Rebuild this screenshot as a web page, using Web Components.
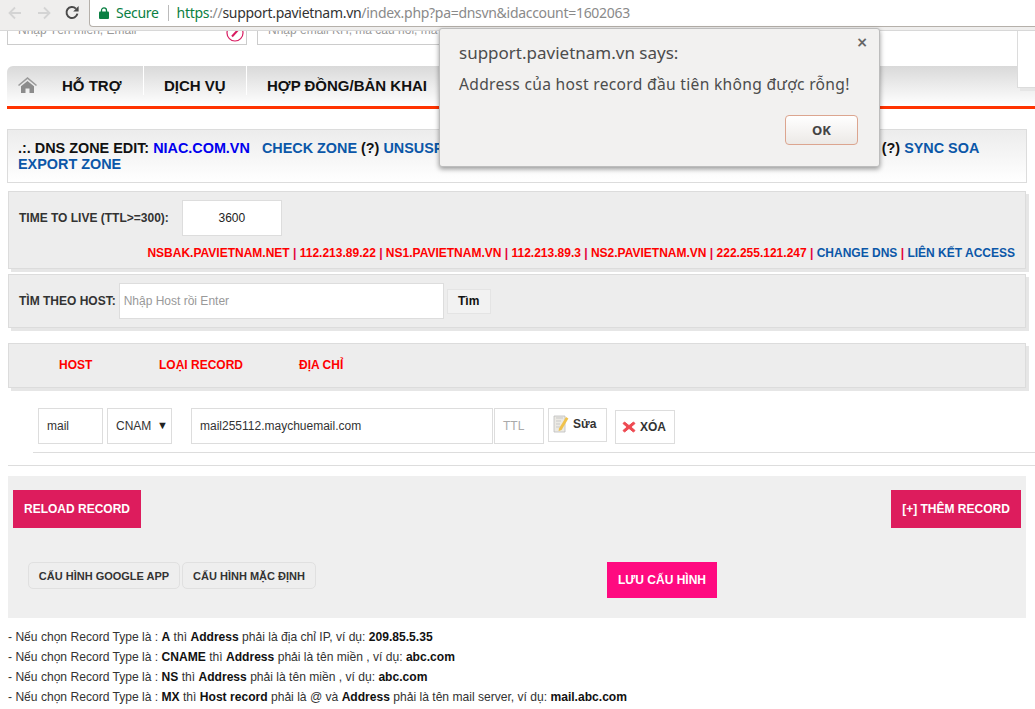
<!DOCTYPE html>
<html lang="vi">
<head>
<meta charset="utf-8">
<title>DNS Zone Edit</title>
<style>
    html, body { margin: 0; height: 709px; overflow: hidden; background: #fff; }
    body { font: 12px/1.2 "Liberation Sans", Arial, sans-serif; color: #222; position: relative; }
    b { font-weight: bold; }
    .blue { color: #0b57a8; }
    .navy { color: #0000ee; }
    .red { color: #ff0000; }
    .sep { color: #e4003a; }
</style>
</head>
<body>
<browser-bar></browser-bar>
<site-search></site-search>
<main-nav></main-nav>

<pa-panel variant="zone"><b>.:. DNS ZONE EDIT: <span class="navy">NIAC.COM.VN</span> &nbsp; <span class="blue">CHECK ZONE</span> (?) <span class="blue">UNSUSPEND</span><span style="display:inline-block;width:408px"></span>(?) <span class="blue">SYNC SOA</span><br><span class="blue">EXPORT ZONE</span></b></pa-panel>

<pa-panel variant="ttl">
    <ttl-row>
        <span slot="label">TIME TO LIVE (TTL&gt;=300):</span>
        <span slot="value">3600</span>
        <b slot="dns"><span class="red">NSBAK.PAVIETNAM.NET</span> <span class="sep">|</span> <span class="red">112.213.89.22</span> <span class="sep">|</span> <span class="red">NS1.PAVIETNAM.VN</span> <span class="sep">|</span> <span class="red">112.213.89.3</span> <span class="sep">|</span> <span class="red">NS2.PAVIETNAM.VN</span> <span class="sep">|</span> <span class="red">222.255.121.247</span> <span class="sep">|</span> <span class="blue">CHANGE DNS</span> <span class="sep">|</span> <span class="blue">LIÊN KẾT ACCESS</span></b>
    </ttl-row>
</pa-panel>

<pa-panel variant="find"><find-host></find-host></pa-panel>
<pa-panel variant="head"><record-head></record-head></pa-panel>
<record-row></record-row>
<record-actions></record-actions>
<help-notes></help-notes>
<side-box></side-box>
<alert-dialog></alert-dialog>

<script>
class BrowserBar extends HTMLElement {
    connectedCallback() {
        this.attachShadow({ mode: 'open' });
        this.shadowRoot.innerHTML = `
            <style>
                :host { display: flex; height: 31px; background: #efeeed; box-sizing: border-box; border-bottom: 1px solid #d8d8d8; position: relative; z-index: 2; }
                .nav { width: 89px; flex: none; display: flex; align-items: center; height: 26px; padding-left: 7px; box-sizing: border-box; gap: 13px; }
                svg { display: block; flex: none; }
                .url { flex: 1; height: 27px; box-sizing: border-box; background: #fff; border: 1px solid #b5b0aa; border-width: 0 0 1px 1px; border-radius: 0 0 0 4px; display: flex; align-items: center; padding: 0 0 1px 9px; font: 14px "Noto Sans", sans-serif; letter-spacing: -.3px; white-space: nowrap; overflow: hidden; }
                .secure { color: #0b8043; margin-left: 7px; }
                .div { width: 1px; height: 16px; background: #bbb; margin: 0 8px 0 9px; }
                .https { color: #0b8043; }
                .host { color: #333; }
                .rest { color: #8a8a8a; }
            </style>
            <div class="nav">
                <svg width="16" height="16" viewBox="0 0 16 16" fill="none" stroke="#d4d4d4" stroke-width="1.8"><path d="M14 8H2.500M8 2.500 2.500 8 8 13.500"/></svg>
                <svg width="16" height="16" viewBox="0 0 16 16" fill="none" stroke="#d4d4d4" stroke-width="1.8"><path d="M2 8h11.500M8 2.500 13.500 8 8 13.500"/></svg>
                <svg width="16" height="16" viewBox="0 0 16 16" fill="none" stroke="#4a4a4a" stroke-width="2" style="margin-left:-1px"><path d="M13.400 8.600A5.500 5.500 0 1 1 11.900 3.600"/><path d="M14.600 1v5.400H9.200z" fill="#4a4a4a" stroke="none"/></svg>
            </div>
            <div class="url">
                <svg width="10" height="12" viewBox="0 0 10 12"><path d="M2.500 5V3.400a2.500 2.500 0 0 1 5 0V5" fill="none" stroke="#0b8043" stroke-width="1.3"/><rect y="4.600" width="10" height="7.400" rx="1" fill="#0b8043"/></svg>
                <span class="secure">Secure</span><span class="div"></span><span class="https">https</span><span class="rest">://</span><span class="host">support.pavietnam.vn</span><span class="rest">/index.php?pa=dnsvn&amp;idaccount=1602063</span>
            </div>`;
    }
}
customElements.define('browser-bar', BrowserBar);

class SiteSearch extends HTMLElement {
    connectedCallback() {
        this.attachShadow({ mode: 'open' });
        this.shadowRoot.innerHTML = `
            <style>
                :host { display: flex; height: 14px; overflow: hidden; align-items: flex-end; padding-left: 7px; font: 12px/16px "Liberation Sans", sans-serif; color: #999; }
                .box { flex: none; height: 36px; box-sizing: border-box; border: 1px solid #ccc; background: #fff; padding: 12px 10px 0; position: relative; white-space: nowrap; }
                .one { width: 240px; }
                .two { width: 580px; margin-left: 10px; }
                svg { position: absolute; right: 2px; top: 14px; }
            </style>
            <div class="box one">Nhập Tên miền, Email
                <svg width="18" height="18" viewBox="0 0 18 18" fill="none"><circle cx="9" cy="9" r="8" stroke="#d81b60" stroke-width="1.2"/><path d="M6 12.500 12 6" stroke="#d81b60" stroke-width="2"/></svg>
            </div>
            <div class="box two">Nhập email KH, mã câu hỏi, mã</div>`;
    }
}
customElements.define('site-search', SiteSearch);

class MainNav extends HTMLElement {
    connectedCallback() {
        this.attachShadow({ mode: 'open' });
        this.shadowRoot.innerHTML = `
            <style>
                :host { display: flex; margin: 21px 0 0 7px; height: 43px; box-sizing: border-box; border-bottom: 3px solid #ff3300; border-top-left-radius: 6px; background: linear-gradient(#d9d9d9, #fff); font: bold 15px "Liberation Sans", sans-serif; color: #111; }
                .home { width: 54px; flex: none; display: flex; align-items: center; padding: 0 0 2px 11px; box-sizing: border-box; }
                a { display: flex; align-items: center; height: 29px; padding-top: 10px; box-sizing: border-box; border-right: 1px solid #fff; white-space: nowrap; }
                .a { width: 83px; padding-left: 1px; }
                .b { width: 103px; padding-left: 20px; }
                .c { padding-left: 20px; border-right: 0; }
            </style>
            <div class="home">
                <svg width="19" height="16" viewBox="0 0 19 16"><path d="M9.500 0 0 8l1 1 8.500-7 8.500 7 1-1z" fill="#9a9a9a"/><path d="M3 9.200 9.500 4 16 9.200V16h-4.500v-4.500h-4V16H3z" fill="#8c8c8c"/></svg>
            </div>
            <a class="a">HỖ TRỢ</a>
            <a class="b">DỊCH VỤ</a>
            <a class="c">HỢP ĐỒNG/BẢN KHAI</a>`;
    }
}
customElements.define('main-nav', MainNav);

class PaPanel extends HTMLElement {
    connectedCallback() {
        this.attachShadow({ mode: 'open' });
        this.shadowRoot.innerHTML = `
            <style>
                :host { display: block; box-sizing: border-box; margin-left: 8px; width: 1018px; border: 1px solid #dcdcdc; background: #ededed; box-shadow: 3px 3px 0 #e6e6e6; }
                :host([variant="zone"]) { margin: 20px 0 0 7px; width: 1020px; height: 54px; background: linear-gradient(#ececec, #fff); box-shadow: none; padding: 10px 10px 0; font: bold 14.4px/16px "Liberation Sans", sans-serif; color: #111; white-space: nowrap; }
                :host([variant="ttl"]) { margin-top: 8px; height: 78px; }
                :host([variant="find"]) { margin-top: 5px; height: 54px; }
                :host([variant="head"]) { margin-top: 15px; height: 45px; }
            </style>
            <slot></slot>`;
    }
}
customElements.define('pa-panel', PaPanel);

class TtlRow extends HTMLElement {
    connectedCallback() {
        this.attachShadow({ mode: 'open' });
        this.shadowRoot.innerHTML = `
            <style>
                :host { display: block; padding: 8px 10px 0; font: 12px "Liberation Sans", sans-serif; color: #333; }
                .top { display: flex; align-items: center; gap: 13px; }
                .label { font-weight: bold; }
                .value { width: 100px; height: 36px; box-sizing: border-box; background: #fff; border: 1px solid #ddd; display: flex; align-items: center; justify-content: center; color: #222; }
                .dns { text-align: right; margin-top: 10px; line-height: 15px; white-space: nowrap; }
            </style>
            <div class="top"><span class="label"><slot name="label"></slot></span><span class="value"><slot name="value"></slot></span></div>
            <div class="dns"><slot name="dns"></slot></div>`;
    }
}
customElements.define('ttl-row', TtlRow);

class FindHost extends HTMLElement {
    connectedCallback() {
        this.attachShadow({ mode: 'open' });
        this.shadowRoot.innerHTML = `
            <style>
                :host { display: flex; align-items: center; height: 52px; padding: 0 0 0 10px; font: 12px "Liberation Sans", sans-serif; color: #333; }
                b { margin-right: 3px; }
                .input { width: 325px; height: 36px; box-sizing: border-box; background: #fff; border: 1px solid #ddd; padding: 0 4px; display: flex; align-items: center; color: #999; }
                .btn { margin-left: 3px; width: 44px; height: 25px; box-sizing: border-box; background: #f2f2f2; border: 1px solid #e4e4e4; display: flex; align-items: center; justify-content: center; font-weight: bold; color: #111; }
            </style>
            <b>TÌM THEO HOST:</b><div class="input">Nhập Host rồi Enter</div><div class="btn">Tìm</div>`;
    }
}
customElements.define('find-host', FindHost);

class RecordHead extends HTMLElement {
    connectedCallback() {
        this.attachShadow({ mode: 'open' });
        this.shadowRoot.innerHTML = `
            <style>
                :host { display: flex; align-items: center; height: 42px; font: bold 12px "Liberation Sans", sans-serif; color: #ff0000; padding-left: 50px; }
                .host { width: 100px; }
                .type { width: 140px; }
            </style>
            <span class="host">HOST</span><span class="type">LOẠI RECORD</span><span>ĐỊA CHỈ</span>`;
    }
}
customElements.define('record-head', RecordHead);

class RecordRow extends HTMLElement {
    connectedCallback() {
        this.attachShadow({ mode: 'open' });
        this.shadowRoot.innerHTML = `
            <style>
                :host { display: block; margin: 20px 0 0; font: 12px "Liberation Sans", sans-serif; color: #333; }
                .row { display: flex; align-items: flex-start; padding-left: 38px; height: 44px; box-sizing: border-box; }
                .line { margin-left: 33px; height: 1px; background: #ddd; }
                .line2 { margin: 12px 0 0 8px; height: 1px; background: #ddd; }
                .f { height: 36px; box-sizing: border-box; background: #fff; border: 1px solid #ddd; display: flex; align-items: center; padding-left: 8px; flex: none; }
                .host { width: 65px; }
                .type { width: 65px; margin-left: 4px; justify-content: space-between; padding-right: 3px; }
                .type i { font-style: normal; font-size: 11px; color: #222; padding-bottom: 2px; }
                .addr { width: 302px; margin-left: 19px; }
                .ttl { width: 50px; margin-left: 1px; color: #aaa; }
                .btn { flex: none; box-sizing: border-box; background: #fff; border: 1px solid #ddd; display: flex; align-items: center; font-weight: bold; color: #333; gap: 4px; }
                .edit { width: 59px; height: 34px; margin-left: 4px; padding-left: 4px; padding-bottom: 2px; }
                .del { width: 60px; height: 34px; margin: 2px 0 0 8px; padding-left: 6px; gap: 4px; }
                svg { display: block; flex: none; }
            </style>
            <div class="row">
                <div class="f host">mail</div>
                <div class="f type"><span>CNAM</span><i>▼</i></div>
                <div class="f addr">mail255112.maychuemail.com</div>
                <div class="f ttl">TTL</div>
                <div class="btn edit">
                    <svg width="16" height="18" viewBox="0 0 16 18"><path d="M1 1h11v16H1z" fill="#eceae4" stroke="#bdbdbd" stroke-width=".8"/><path d="M3 3h7M3 6h5M3 9h4M3 12h4" stroke="#c9c9c9"/><path d="M6 13.500 13 2l2.400 1.400L8.600 15l-3 1z" fill="#f0c24c"/></svg>
                    <span>Sửa</span>
                </div>
                <div class="btn del">
                    <svg width="14" height="14" viewBox="0 0 14 14"><path d="M2.500 2 7 5.600 11.500 2 13 3.500 9 7l4 3.500-1.500 1.600L7 8.400l-4.500 3.700L1 10.500 5 7 1 3.500z" fill="#ee4a52" stroke="#ee4a52" stroke-width="1"/></svg>
                    <span>XÓA</span>
                </div>
            </div>
            <div class="line"></div>
            <div class="line2"></div>`;
    }
}
customElements.define('record-row', RecordRow);

class RecordActions extends HTMLElement {
    connectedCallback() {
        this.attachShadow({ mode: 'open' });
        this.shadowRoot.innerHTML = `
            <style>
                :host { display: block; margin: 10px 0 0 8px; width: 1018px; height: 142px; box-sizing: border-box; background: #efefef; padding: 14px 5px 0; font: bold 12px "Liberation Sans", sans-serif; }
                .top { display: flex; justify-content: space-between; }
                .pri { height: 38px; display: flex; align-items: center; justify-content: center; color: #fff; background: #dd1c5d; box-sizing: border-box; }
                .reload { width: 128px; }
                .add { width: 130px; }
                .bottom { display: flex; align-items: flex-start; margin-top: 34px; padding-left: 15px; }
                .sec { height: 27px; box-sizing: border-box; display: flex; align-items: center; justify-content: center; background: #eee; border: 1px solid #e0e0e0; border-radius: 5px; color: #333; font-size: 11px; }
                .g { width: 152px; }
                .d { width: 134px; margin-left: 2px; }
                .save { width: 110px; height: 36px; margin-left: 291px; background: #ff0a80; }
            </style>
            <div class="top"><div class="pri reload">RELOAD RECORD</div><div class="pri add">[+] THÊM RECORD</div></div>
            <div class="bottom">
                <div class="sec g">CẤU HÌNH GOOGLE APP</div>
                <div class="sec d">CẤU HÌNH MẶC ĐỊNH</div>
                <div class="pri save">LƯU CẤU HÌNH</div>
            </div>`;
    }
}
customElements.define('record-actions', RecordActions);

class HelpNotes extends HTMLElement {
    connectedCallback() {
        this.attachShadow({ mode: 'open' });
        this.shadowRoot.innerHTML = `
            <style>
                :host { display: block; margin: 9px 0 0 8px; font: 12.08px/20px "Liberation Sans", sans-serif; color: #333; }
                b { color: #111; }
            </style>
            <div>- Nếu chọn Record Type là : <b>A</b> thì <b>Address</b> phải là địa chỉ IP, ví dụ: <b>209.85.5.35</b></div>
            <div>- Nếu chọn Record Type là : <b>CNAME</b> thì <b>Address</b> phải là tên miền , ví dụ: <b>abc.com</b></div>
            <div>- Nếu chọn Record Type là : <b>NS</b> thì <b>Address</b> phải là tên miền , ví dụ: <b>abc.com</b></div>
            <div>- Nếu chọn Record Type là : <b>MX</b> thì <b>Host record</b> phải là @ và <b>Address</b> phải là tên mail server, ví dụ: <b>mail.abc.com</b></div>`;
    }
}
customElements.define('help-notes', HelpNotes);

// white box that hangs over the nav on the right
class SideBox extends HTMLElement {
    connectedCallback() {
        this.attachShadow({ mode: 'open' });
        this.shadowRoot.innerHTML = `
            <style>
                :host { display: block; position: absolute; left: 1017px; top: 31px; width: 18px; height: 57px; box-sizing: border-box; background: #fff; border: solid #dcdcdc; border-width: 0 0 1px 1px; box-shadow: 3px 3px 0 #e6e6e6; }
            </style>`;
    }
}
customElements.define('side-box', SideBox);

// alert lies over the page
class AlertDialog extends HTMLElement {
    connectedCallback() {
        this.attachShadow({ mode: 'open' });
        this.shadowRoot.innerHTML = `
            <style>
                :host { display: block; position: absolute; left: 439px; top: 28px; width: 441px; height: 139px; box-sizing: border-box; z-index: 3; background: #f2f1f0; border: 1px solid #bdbdbd; border-radius: 3px; box-shadow: 0 2px 5px rgba(0,0,0,.4); font-family: "Noto Sans", sans-serif; color: #4c4c4c; padding: 13px 19px 0; }
                .x { position: absolute; right: 11px; top: 5px; font: bold 14px "DejaVu Sans", sans-serif; color: #666; }
                .title { font-size: 17px; line-height: 22px; }
                .msg { font-size: 15.6px; line-height: 22px; margin-top: 9px; letter-spacing: .3px; white-space: nowrap; }
                .foot { display: flex; justify-content: flex-end; margin: 20px 2px 0 0; }
                .ok { width: 73px; height: 30px; box-sizing: border-box; border: 1px solid #dca58f; border-radius: 4px; background: linear-gradient(#fff, #ece9e6); font: bold 13px "Noto Sans", sans-serif; color: #444; display: flex; align-items: center; justify-content: center; }
            </style>
            <span class="x">×</span>
            <div class="title">support.pavietnam.vn says:</div>
            <div class="msg">Address của host record đầu tiên không được rỗng!</div>
            <div class="foot"><div class="ok">OK</div></div>`;
    }
}
customElements.define('alert-dialog', AlertDialog);
</script>
</body>
</html>
